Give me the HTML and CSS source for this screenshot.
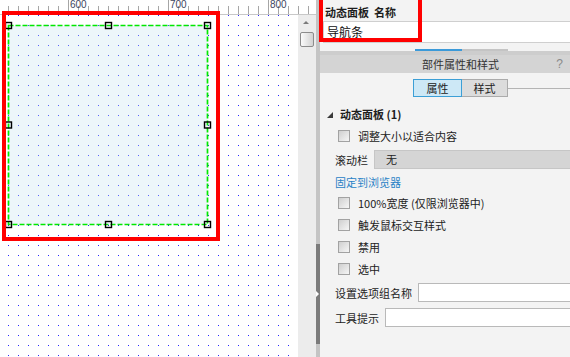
FILE: index.html
```html
<!DOCTYPE html>
<html lang="zh">
<head>
<meta charset="utf-8">
<title>动态面板</title>
<link rel="stylesheet" href="styles.css">
</head>
<body>
  <div class="left">
    <div class="ruler"><span>600</span><span>700</span><span>800</span></div>
    <div class="below">
      <div class="canvas"></div>
      <div class="vscroll">
        <div class="up"></div>
        <div class="thumb"></div>
      </div>
    </div>
  </div>
  <div class="splitter">
    <div class="sp-top"></div>
    <div class="sp-mid"><div class="sp-arrow"></div></div>
    <div class="sp-bot"></div>
  </div>
  <div class="panel">
    <div class="name-label">动态面板&nbsp;&nbsp;名称</div>
    <div class="name-input">导航条</div>
    <div class="tabline"><span class="tl-blue"></span><span class="tl-grey"></span></div>
    <div class="band"></div>
    <div class="hdr"><span class="hdr-title">部件属性和样式</span><span class="help">?</span></div>
    <div class="toggle"><span class="tb active">属性</span><span class="tb">样式</span><span class="tline"></span></div>
    <div class="title-row"><span class="tri"></span><span class="title">动态面板 (1)</span></div>
    <div class="chk-row"><span class="box"></span>调整大小以适合内容</div>
    <div class="field-row"><span>滚动栏</span><span class="select">无</span></div>
    <div class="link-row">固定到浏览器</div>
    <div class="chk-row"><span class="box"></span>100%宽度 (仅限浏览器中)</div>
    <div class="chk-row"><span class="box"></span>触发鼠标交互样式</div>
    <div class="chk-row"><span class="box"></span>禁用</div>
    <div class="chk-row"><span class="box"></span>选中</div>
    <div class="field-row"><span>设置选项组名称</span><span class="input"></span></div>
    <div class="field-row"><span>工具提示</span><span class="input"></span></div>
  </div>

  <svg class="widget" width="220" height="240" viewBox="0 0 220 240">
    <rect x="8.5" y="25.5" width="199" height="199" fill="#c6e2ee" fill-opacity="0.32" stroke="#00e800" stroke-width="1.7" stroke-dasharray="5 2"/>
    <g fill="none" stroke="#000" stroke-width="1.4">
      <rect x="5.5" y="22.5" width="6" height="6"/>
      <rect x="105.5" y="22.5" width="6" height="6"/>
      <rect x="204.5" y="22.5" width="6" height="6"/>
      <rect x="5.5" y="122" width="6" height="6"/>
      <rect x="204.5" y="122" width="6" height="6"/>
      <rect x="5.5" y="221.5" width="6" height="6"/>
      <rect x="105.5" y="221.5" width="6" height="6"/>
      <rect x="204.5" y="221.5" width="6" height="6"/>
    </g>
  </svg>
  <div class="hl hl1"></div>
  <div class="hl hl2"></div>
</body>
</html>
```
FILE: styles.css
```css
html, body {
  margin: 0;
  padding: 0;
}
body {
  width: 570px;
  height: 357px;
  overflow: hidden;
  display: flex;
  position: relative;
  background: #fff;
  font-family: "Noto Sans CJK SC", "Noto Sans", sans-serif;
  font-size: 11px;
  color: #222;
}
.left {
  width: 316px;
  flex: none;
  display: flex;
  flex-direction: column;
}
.ruler {
  height: 14px;
  border-bottom: 1px solid #c8c8c8;
  padding-left: 70px;
  display: flex;
  background-color: #fff;
  background-image:
    repeating-linear-gradient(90deg, transparent 0 68px, #a6a6a6 68px 69px, transparent 69px 100px),
    repeating-linear-gradient(90deg, transparent 0 8px, #a6a6a6 8px 9px, transparent 9px 10px);
  background-size: 100% 14px, 100% 8px;
  background-position: 0 0, 0 6px;
  background-repeat: no-repeat;
}
.ruler span {
  flex: none;
  width: 100px;
  font-family: "Liberation Sans", Arial, sans-serif;
  font-size: 10px;
  line-height: 10px;
  padding-top: 0;
  color: #3d4660;
}
.below {
  flex: 1;
  display: flex;
}
.canvas {
  width: 298px;
  flex: none;
  background-color: #2a2aff;
  background-image:
    linear-gradient(90deg, #fff 0 9px, transparent 9px),
    linear-gradient(#fff 0 9px, transparent 9px);
  background-size: 10px 10px;
  background-position: -1px -9px;
}
.vscroll {
  width: 18px;
  flex: none;
  background: #ececec;
  display: flex;
  flex-direction: column;
  align-items: center;
}
.up {
  margin-top: 6px;
  margin-left: -3px;
  width: 0;
  height: 0;
  border-left: 3px solid transparent;
  border-right: 3px solid transparent;
  border-bottom: 3px solid #7a7a7a;
}
.thumb {
  margin-top: 8px;
  width: 14px;
  height: 15px;
  box-sizing: border-box;
  border: 1px solid #8c8c8c;
  border-radius: 2px;
  background: linear-gradient(90deg, #fbfbfb, #d2d2d2);
}
.splitter {
  width: 4px;
  flex: none;
  display: flex;
  flex-direction: column;
}
.sp-top {
  height: 244px;
  background: #c4c4c4;
}
.sp-mid {
  height: 100px;
  background: #7b7b7b;
  display: flex;
  align-items: center;
}
.sp-arrow {
  width: 0;
  height: 0;
  border-left: 3px solid #fff;
  border-top: 3px solid transparent;
  border-bottom: 3px solid transparent;
}
.sp-bot {
  flex: 1;
  background: #c4c4c4;
}
.panel {
  width: 250px;
  flex: none;
  background: #f3f3f3;
  display: flex;
  flex-direction: column;
  overflow: hidden;
}
.name-label {
  margin-top: 4px;
  height: 16px;
  line-height: 16px;
  padding-left: 5px;
  font-weight: bold;
  color: #1e1e1e;
}
.name-input {
  margin: 1px -3px 0 3px;
  height: 22px;
  box-sizing: border-box;
  border: 1px solid #cfcfcf;
  background: #fff;
  font-size: 12px;
  line-height: 20px;
  padding-left: 3px;
  color: #111;
}
.tabline {
  margin-top: 6px;
  height: 2px;
  display: flex;
  padding-left: 95px;
}
.tl-blue {
  width: 47px;
  background: #3b9ad9;
}
.tl-grey {
  width: 46px;
  background: #c4c4c4;
}
.band {
  height: 4px;
  background: #cdcdcd;
}
.hdr {
  height: 18px;
  line-height: 18px;
  background: #d4d4d4;
  display: flex;
  color: #333;
}
.hdr-title {
  margin-left: 102px;
}
.help {
  margin-left: auto;
  padding-right: 7px;
  color: #8a8a8a;
  font-family: "Liberation Sans", Arial, sans-serif;
  font-size: 12px;
}
.toggle {
  margin-top: 6px;
  height: 18px;
  display: flex;
  align-items: center;
  padding-left: 93px;
}
.tb {
  width: 46px;
  height: 18px;
  box-sizing: border-box;
  border: 1px solid #ababab;
  border-left: none;
  background: #dcdcdc;
  text-align: center;
  line-height: 16px;
  color: #222;
}
.tb.active {
  width: 49px;
  border: 1px solid #3c9fd6;
  background: #cde8f6;
}
.tline {
  flex: 1;
  height: 1px;
  background: #b4b4b4;
}
.title-row {
  margin-top: 6px;
  height: 22px;
  display: flex;
  align-items: center;
  padding-left: 7px;
}
.tri {
  width: 0;
  height: 0;
  border-left: 6px solid transparent;
  border-bottom: 6px solid #3a3a3a;
  margin-top: 1px;
}
.title {
  margin-left: 7px;
  font-weight: bold;
  color: #1e1e1e;
}
.chk-row {
  height: 22px;
  display: flex;
  align-items: center;
  padding-left: 18px;
}
.box {
  width: 12px;
  height: 12px;
  box-sizing: border-box;
  border: 1px solid #a2a2a2;
  background: linear-gradient(135deg, #cfcfcf, #f6f6f6);
  margin-right: 8px;
  flex: none;
}
.field-row {
  height: 25px;
  display: flex;
  align-items: center;
  padding-left: 15px;
}
.select {
  flex: 1;
  margin-left: 6px;
  margin-right: -2px;
  height: 19px;
  box-sizing: border-box;
  border: 1px solid #c6c6c6;
  background: #d5d5d5;
  line-height: 17px;
  padding-left: 11px;
}
.input {
  flex: 1;
  margin-left: 6px;
  margin-right: -2px;
  height: 19px;
  box-sizing: border-box;
  border: 1px solid #b9b9b9;
  background: #fff;
}
.link-row {
  height: 20px;
  display: flex;
  align-items: center;
  padding-left: 15px;
  color: #2a82c6;
}
.widget {
  position: absolute;
  left: 0;
  top: 0;
}
.hl {
  position: absolute;
  box-sizing: border-box;
  border: 4px solid #ff0000;
}
.hl1 {
  left: 2px;
  top: 11px;
  width: 218px;
  height: 230px;
}
.hl2 {
  left: 319px;
  top: -5px;
  width: 103px;
  height: 47px;
}
```
